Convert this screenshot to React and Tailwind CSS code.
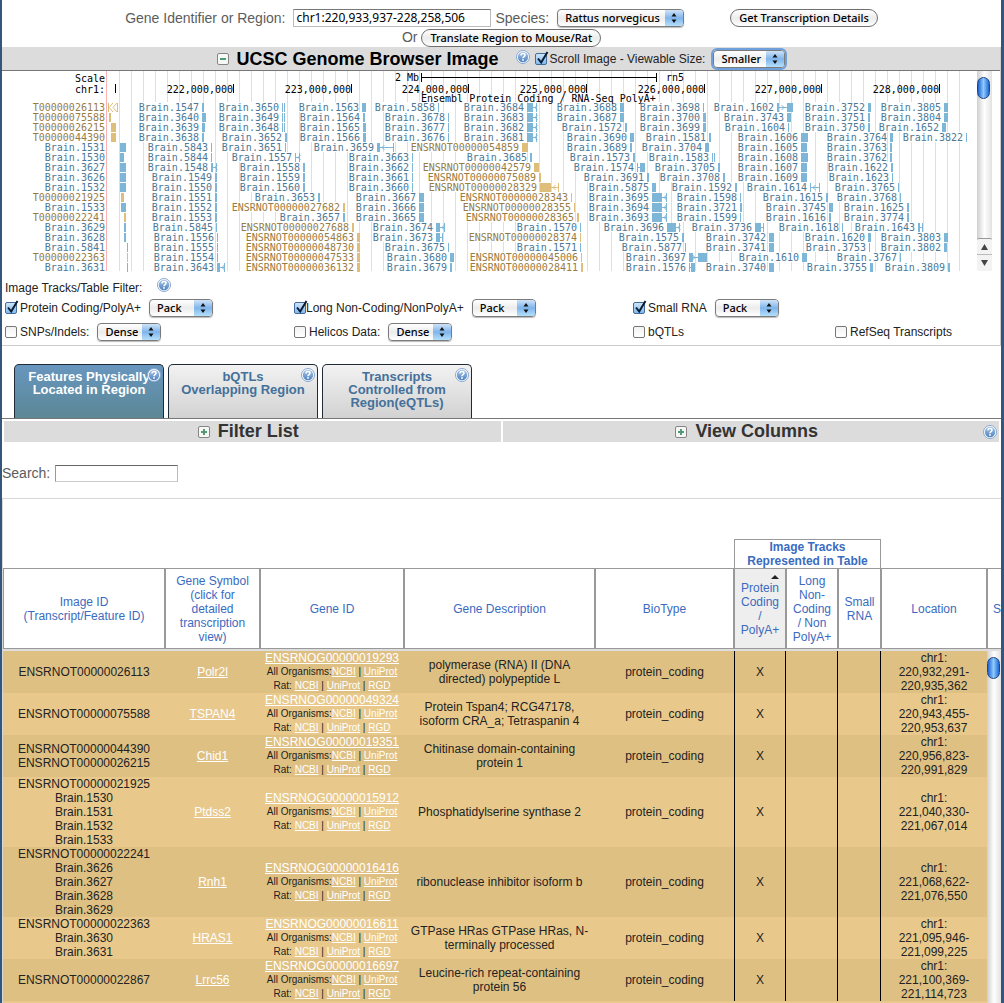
import React from "react";

const BLUE_BAR = "#7db6d6";
const GOLD_BAR = "#dfbd7b";

/* Each item: [label, start, width, tail end (optional), kind (optional)] */
const TRACK_ROWS = [
  [["T00000026113", 108, 10, 0, "chevrons"], ["Brain.1547", 202, 2], ["Brain.3650", 282, 3, 0, "pair"], ["Brain.1563", 362, 4], ["Brain.5858", 438, 1], ["Brain.3684", 527, 6, 537], ["Brain.3688", 620, 4], ["Brain.3698", 703, 1], ["Brain.1602", 777, 2, 0, "arrowBlock", 787, 6], ["Brain.3752", 868, 3], ["Brain.3805", 944, 4]],
  [["T00000075588", 109, 2], ["Brain.3640", 202, 4], ["Brain.3649", 282, 3, 0, "pair"], ["Brain.1564", 363, 2], ["Brain.3678", 448, 1], ["Brain.3683", 527, 6, 537], ["Brain.3687", 620, 4], ["Brain.3700", 703, 3], ["Brain.3743", 787, 4], ["Brain.3751", 868, 2], ["Brain.3804", 944, 4]],
  [["T00000026215", 111, 5], ["Brain.3639", 202, 3], ["Brain.3648", 282, 3, 0, "pair"], ["Brain.1565", 363, 3], ["Brain.3677", 448, 1], ["Brain.3682", 527, 6, 537], ["Brain.1572", 625, 2], ["Brain.3699", 703, 3], ["Brain.1604", 788, 1], ["Brain.3750", 868, 2], ["Brain.1652", 942, 4]],
  [["T00000044390", 111, 5], ["Brain.3638", 202, 2], ["Brain.3652", 285, 2], ["Brain.1566", 363, 3], ["Brain.3676", 448, 1], ["Brain.3681", 527, 6, 537], ["Brain.3690", 630, 4], ["Brain.1581", 709, 2], ["Brain.1606", 801, 7], ["Brain.3764", 890, 3], ["Brain.3822", 966, 1]],
  [["Brain.1531", 120, 6], ["Brain.5843", 211, 1], ["Brain.3651", 285, 1], ["Brain.3659", 377, 3, 394], ["ENSRNOT00000054859", 522, 6], ["Brain.3689", 630, 2], ["Brain.3704", 705, 4], ["Brain.1605", 801, 6], ["Brain.3763", 890, 2]],
  [["Brain.1530", 120, 4], ["Brain.5844", 211, 1], ["Brain.1557", 295, 1, 300], ["Brain.3663", 412, 1], ["Brain.3685", 530, 2], ["Brain.1573", 633, 2], ["Brain.1583", 712, 3, 0, "pair"], ["Brain.1608", 801, 7], ["Brain.3762", 890, 2]],
  [["Brain.3627", 120, 6], ["Brain.1548", 211, 2, 217], ["Brain.1558", 303, 2], ["Brain.3662", 412, 1], ["ENSRNOT00000042579", 534, 5], ["Brain.1574", 637, 1, 0, "arrowBlock", 640, 5], ["Brain.3705", 718, 2], ["Brain.1607", 801, 6], ["Brain.1622", 891, 2]],
  [["Brain.3626", 120, 6], ["Brain.1549", 215, 2], ["Brain.1559", 303, 2], ["Brain.3661", 412, 1], ["ENSRNOT00000075089", 539, 2], ["Brain.3691", 647, 2], ["Brain.3708", 723, 2], ["Brain.1609", 801, 6], ["Brain.1623", 892, 1]],
  [["Brain.1532", 120, 6], ["Brain.1550", 215, 2], ["Brain.1560", 303, 2], ["Brain.3660", 412, 1], ["ENSRNOT00000028329", 540, 11, 559], ["Brain.5875", 652, 4], ["Brain.1592", 735, 2], ["Brain.1614", 810, 1, 820], ["Brain.3765", 898, 1]],
  [["T00000021925", 121, 3], ["Brain.1551", 215, 2], ["Brain.3653", 318, 2], ["Brain.3667", 419, 5], ["ENSRNOT00000028343", 571, 1], ["Brain.3695", 652, 10, 667], ["Brain.1598", 740, 1], ["Brain.1615", 826, 2], ["Brain.3768", 900, 1]],
  [["Brain.1533", 121, 5], ["Brain.1552", 215, 2], ["ENSRNOT00000027682", 343, 2], ["Brain.3666", 419, 5], ["ENSRNOT00000028355", 574, 1], ["Brain.3694", 652, 10, 667], ["Brain.3721", 740, 2], ["Brain.3745", 829, 4], ["Brain.1625", 907, 2]],
  [["T00000022241", 124, 2], ["Brain.1553", 215, 2], ["Brain.3657", 343, 2], ["Brain.3665", 419, 5], ["ENSRNOT00000028365", 577, 2], ["Brain.3693", 652, 10, 667], ["Brain.1599", 740, 1], ["Brain.1616", 829, 2], ["Brain.3774", 907, 2]],
  [["Brain.3629", 124, 2], ["Brain.5845", 216, 1], ["ENSRNOT00000027688", 352, 2], ["Brain.3674", 436, 4, 445], ["Brain.1570", 580, 1], ["Brain.3696", 667, 9, 680], ["Brain.3736", 755, 6, 764], ["Brain.1618", 842, 1], ["Brain.1643", 918, 2, 923]],
  [["Brain.3628", 124, 2], ["Brain.1556", 217, 1], ["ENSRNOT00000054863", 357, 3], ["Brain.3673", 436, 4, 443], ["ENSRNOT00000028374", 580, 1], ["Brain.1575", 682, 2], ["Brain.3742", 769, 5], ["Brain.1620", 868, 3], ["Brain.3803", 944, 4]],
  [["Brain.5841", 127, 1], ["Brain.1555", 217, 1], ["ENSRNOT00000048730", 357, 3], ["Brain.3675", 448, 1], ["Brain.1571", 580, 1], ["Brain.5877", 685, 1], ["Brain.3741", 769, 5], ["Brain.3753", 869, 1], ["Brain.3802", 944, 3]],
  [["T00000022363", 127, 1], ["Brain.1554", 217, 1], ["ENSRNOT00000047533", 357, 3], ["Brain.3680", 450, 4], ["ENSRNOT00000045006", 581, 1], ["Brain.3697", 689, 4, 0, "arrowBlock", 698, 9], ["Brain.1610", 802, 5], ["Brain.3767", 900, 1]],
  [["Brain.3631", 127, 1], ["Brain.3643", 217, 3, 225], ["ENSRNOT00000036132", 357, 3], ["Brain.3679", 450, 2], ["ENSRNOT00000028411", 581, 2], ["Brain.1576", 689, 1, 0, "arrowBlock", 691, 4], ["Brain.3740", 769, 5], ["Brain.3755", 870, 3], ["Brain.3809", 948, 2]],
];

const AXIS = [
  ["222,000,000", 233],
  ["223,000,000", 351],
  ["224,000,000", 468],
  ["225,000,000", 586],
  ["226,000,000", 704],
  ["227,000,000", 821],
  ["228,000,000", 939],
];

function Feature({ item, first, row }) {
  const [label, x, w, tail, kind, bx, bw] = item;
  const blue = label.startsWith("Brain");
  const color = blue ? BLUE_BAR : GOLD_BAR;
  const top = 103 + row * 10;
  const mid = top + 4;
  const end = first ? 105 : x - 3;
  return (
    <g fill={color} stroke="none">
      <rect x={end - label.length * 6} y={top - 1} width={label.length * 6} height={10} fill="#fff" />
      <text x={end} y={top + 8} textAnchor="end" fill={blue ? "#4d7896" : "#977c45"}>
        {label}
      </text>
      {kind === "chevrons" ? (
        <path d={`M${x + 0.5} ${top}v9M${x + 5} ${top}l-4 4.500l4 4.500M${x + 9} ${top}l-4 4.500l4 4.500M${x + 9.5} ${top}v9`} fill="none" stroke={color} />
      ) : kind === "pair" ? (
        <path d={`M${x} ${top}h1v9h-1zM${x + 2} ${top}h1v9h-1z`} />
      ) : (
        <rect x={x} y={top} width={w} height={9} />
      )}
      {tail ? <path d={`M${x + w} ${mid}h${tail - x - w}v1h${x + w - tail}zM${tail - 1} ${top}h1v9h-1z`} /> : null}
      {tail && tail - x - w > 3 ? (
        <path d={`M${x + w + 4.5} ${top + 2}l-2.500 2.500l2.500 2.500`} fill="none" stroke={color} />
      ) : null}
      {kind === "arrowBlock" ? (
        <>
          <path d={`M${x + w} ${mid}h${bx - x - w}v1h${x + w - bx}zM${bx} ${top}h${bw}v9h${-bw}z`} />
          {bx - x > 6 ? <path d={`M${bx - 5.5} ${top + 2}l2.500 2.500l-2.500 2.500`} fill="none" stroke={color} /> : null}
        </>
      ) : null}
    </g>
  );
}

function GenomeImage() {
  return (
    <svg
      width="974"
      height="203"
      viewBox="3 71 974 203"
      role="img"
      aria-label="Genome region chr1:220,933,937-228,258,506"
      className="block shrink-0"
      fontFamily='"DejaVu Sans Mono", monospace'
      fontSize="10"
    >
      <g fill="#dcdcf8">
        {Array.from({ length: 71 }, (_, i) => (
          <rect key={i} x={119 + i * 12} y="71" width="1" height="200" />
        ))}
      </g>
      <rect x="106" y="71" width="1" height="200" fill="#ffb0b0" />
      <g fill="#000">
        <text x="105" y="82" textAnchor="end">Scale</text>
        <text x="105" y="93" textAnchor="end">chr1:</text>
        <rect x="115" y="84" width="1" height="9" />
        {AXIS.map(([label, x]) => (
          <g key={label}>
            <text x={x} y="93" textAnchor="end">{label}</text>
            <rect x={x} y="84" width="1" height="9" />
          </g>
        ))}
        <text x="419" y="81" textAnchor="end">2 Mb</text>
        <path d="M421 73h1v9h-1zM422 77h234v1H422zM656 73h1v9h-1z" />
        <text x="666" y="81">rn5</text>
      </g>
      {TRACK_ROWS.map((items, row) =>
        items.map((item, i) => <Feature key={item[0]} item={item} first={i === 0} row={row} />)
      )}
      <text x="421" y="102" fill="#000">Ensembl Protein Coding / RNA-Seq PolyA+</text>
    </svg>
  );
}

function HelpButton({ className = "" }) {
  return (
    <button type="button" aria-label="Help" className={`block shrink-0 ${className}`}>
      <svg width="14" height="14" viewBox="0 0 14 14" className="block">
        <defs>
          <linearGradient id="help-fill" x1="0" y1="0" x2="0" y2="1">
            <stop offset="0" stopColor="#a9c6e8" />
            <stop offset="1" stopColor="#4f82bf" />
          </linearGradient>
        </defs>
        <circle cx="7" cy="7" r="6.5" fill="#fff" stroke="#86a8d0" />
        <circle cx="7" cy="7" r="5.2" fill="url(#help-fill)" />
        <path d="M5 5.600C5 4.200 5.900 3.600 7 3.600s2 .7 2 1.700c0 1.400-2 1.400-2 2.900" fill="none" stroke="#fff" strokeWidth="1.500" />
        <circle cx="7" cy="10" r=".9" fill="#fff" />
      </svg>
    </button>
  );
}

function ToggleButton({ open, label }) {
  return (
    <button type="button" aria-label={label} className="block shrink-0">
      <svg width="12" height="12" viewBox="0 0 12 12" className="block">
        <rect x=".5" y=".5" width="11" height="11" rx="1.500" fill="#f7f7f7" stroke="#858585" />
        <path d={open ? "M3 6h6" : "M3 6h6M6 3v6"} stroke="#4f9b78" strokeWidth="2" />
      </svg>
    </button>
  );
}

function Check({ id, checked = false, label, gap = "gap-[3px]" }) {
  return (
    <label htmlFor={id} className={`flex items-center ${gap}`}>
      <span className="relative block size-3">
        <input
          id={id}
          type="checkbox"
          defaultChecked={checked}
          className="peer block size-3 appearance-none rounded-[2px] border border-[#777] bg-linear-to-b from-[#f2f2f2] to-white checked:border-[#456a9c] checked:from-[#cfe4f8] checked:to-[#7fbaf0]"
        />
        <svg viewBox="0 0 14 14" width="14" height="14" className="pointer-events-none absolute bottom-0 left-0 hidden peer-checked:block">
          <path d="M3 7.500l3.200 4L12.500 1" fill="none" stroke="#0b1d33" strokeWidth="2" />
        </svg>
      </span>
      {label}
    </label>
  );
}

function Picker({ id, label, value, width, glow = false }) {
  return (
    <span
      className={`relative block h-[18px] shrink-0 overflow-hidden rounded-[4px] border border-[#7b7b7b] bg-linear-to-b from-white via-[#ececec] to-white text-black shadow-[0_1px_1px_#bbb] ${width} ${glow ? "outline-2 outline-[#6fa0dc]" : ""}`}
    >
      <select
        id={id}
        aria-label={label}
        defaultValue={value}
        className="block h-4 w-full appearance-none bg-transparent pl-[7px] font-['Noto_Sans','Open_Sans',sans-serif] text-[11px] leading-4 font-medium outline-none"
      >
        <option>{value}</option>
      </select>
      <svg viewBox="0 0 18 16" width="18" height="16" className="pointer-events-none absolute top-0 right-0">
        <defs>
          <linearGradient id="aqua-step" x1="0" y1="0" x2="0" y2="1">
            <stop offset="0" stopColor="#cfe3f7" />
            <stop offset=".5" stopColor="#7fb5ec" />
            <stop offset="1" stopColor="#b5e0fb" />
          </linearGradient>
        </defs>
        <rect width="18" height="16" fill="url(#aqua-step)" />
        <path d="M9 3l2.500 3.500h-5zM9 13l2.500-3.500h-5z" fill="#111" />
      </svg>
    </span>
  );
}

function AquaButton({ children }) {
  return (
    <button
      type="button"
      className="h-[18px] shrink-0 rounded-full border border-[#6f6f6f] bg-linear-to-b from-white via-[#ececec] to-white px-2 font-['Noto_Sans','Open_Sans',sans-serif] text-[11px] leading-4 font-medium text-black"
    >
      {children}
    </button>
  );
}

function ScrollTrack({ arrows = false }) {
  return (
    <div className="flex w-full flex-1 flex-col bg-linear-to-r from-[#cfcfcf] via-white to-[#e2e2e2]">
      <div className="h-1.5" />
      <div className="h-[22px] w-[13px] rounded-full border border-[#24477f] bg-linear-to-r from-[#1e5fd0] via-[#8fcbfb] to-[#1c66d6]" />
      <div className="flex-1" />
      {arrows && (
        <div className="rounded-t-[2px] border-t border-[#999] bg-[#f3f3f3]">
          <button type="button" aria-label="Scroll up" className="flex h-4 w-full items-center justify-center border-b border-[#bbb]">
            <svg width="7" height="6" viewBox="0 0 7 6"><path d="M3.500 0L7 6H0z" fill="#444" /></svg>
          </button>
          <button type="button" aria-label="Scroll down" className="flex h-4 w-full items-center justify-center">
            <svg width="7" height="6" viewBox="0 0 7 6"><path d="M3.500 6L7 0H0z" fill="#444" /></svg>
          </button>
        </div>
      )}
    </div>
  );
}

const TABS = [
  { text: "Features Physically\nLocated in Region", active: true },
  { text: "bQTLs\nOverlapping Region" },
  { text: "Transcripts\nControlled from\nRegion(eQTLs)" },
];

const GENES = [
  { ids: ["ENSRNOT00000026113"], symbol: "Polr2l", gene: "ENSRNOG00000019293", desc: "polymerase (RNA) II (DNA\ndirected) polypeptide L", loc: "chr1:\n220,932,291-\n220,935,362" },
  { ids: ["ENSRNOT00000075588"], symbol: "TSPAN4", gene: "ENSRNOG00000049324", desc: "Protein Tspan4; RCG47178,\nisoform CRA_a; Tetraspanin 4", loc: "chr1:\n220,943,455-\n220,953,637" },
  { ids: ["ENSRNOT00000044390", "ENSRNOT00000026215"], symbol: "Chid1", gene: "ENSRNOG00000019351", desc: "Chitinase domain-containing\nprotein 1", loc: "chr1:\n220,956,823-\n220,991,829" },
  { ids: ["ENSRNOT00000021925", "Brain.1530", "Brain.1531", "Brain.1532", "Brain.1533"], symbol: "Ptdss2", gene: "ENSRNOG00000015912", desc: "Phosphatidylserine synthase 2", loc: "chr1:\n221,040,330-\n221,067,014" },
  { ids: ["ENSRNOT00000022241", "Brain.3626", "Brain.3627", "Brain.3628", "Brain.3629"], symbol: "Rnh1", gene: "ENSRNOG00000016416", desc: "ribonuclease inhibitor isoform b", loc: "chr1:\n221,068,622-\n221,076,550" },
  { ids: ["ENSRNOT00000022363", "Brain.3630", "Brain.3631"], symbol: "HRAS1", gene: "ENSRNOG00000016611", desc: "GTPase HRas GTPase HRas, N-\nterminally processed", loc: "chr1:\n221,095,946-\n221,099,225" },
  { ids: ["ENSRNOT00000022867"], symbol: "Lrrc56", gene: "ENSRNOG00000016697", desc: "Leucine-rich repeat-containing\nprotein 56", loc: "chr1:\n221,100,369-\n221,114,723" },
];

const HEADERS = [
  "Image ID\n(Transcript/Feature ID)",
  "Gene Symbol\n(click for\ndetailed\ntranscription\nview)",
  "Gene ID",
  "Gene Description",
  "BioType",
  "Protein\nCoding\n/\nPolyA+",
  "Long\nNon-\nCoding\n/ Non\nPolyA+",
  "Small\nRNA",
  "Location",
];

function WhiteLink({ children }) {
  return <a href="#" className="text-white underline">{children}</a>;
}

function GeneTable() {
  return (
    <table className="w-full table-fixed border-separate border-spacing-0 text-center text-[12px] leading-[14px] text-[#222]">
      <colgroup>
        <col className="w-[162px]" />
        <col className="w-[95px]" />
        <col className="w-[144px]" />
        <col />
        <col className="w-[139px]" />
        <col className="w-[52px]" />
        <col className="w-[52px]" />
        <col className="w-[43px]" />
        <col className="w-[106px]" />
      </colgroup>
      <thead className="text-[#3a6bbf]">
        <tr className="h-[29px]">
          <td colSpan={5} />
          <th colSpan={3} className="border border-b-0 border-[#999] p-0 font-bold">
            Image Tracks<br />Represented in Table
          </th>
          <td />
        </tr>
        <tr className="h-[81px]">
          {HEADERS.map((h, i) => (
            <th key={h} scope="col" className={`relative border border-[#999] p-0 font-normal whitespace-pre-line ${i === 5 ? "bg-[#eee]" : ""}`}>
              {h}
              {i === 5 && (
                <svg width="8" height="4" viewBox="0 0 8 4" className="absolute top-1.5 right-1.5">
                  <path d="M4 0l4 4H0z" fill="#222" />
                </svg>
              )}
            </th>
          ))}
        </tr>
        <tr className="h-[2px]">
          <td colSpan={9} className="bg-[#dedede] p-0 leading-none" />
        </tr>
      </thead>
      <tbody>
        {GENES.map((g) => (
          <tr key={g.gene} className="h-[42px] odd:bg-[#dfc083] even:bg-[#e8c98b]">
            <td className="p-0">{g.ids.map((id) => <div key={id}>{id}</div>)}</td>
            <td className="p-0"><WhiteLink>{g.symbol}</WhiteLink></td>
            <td className="p-0">
              <div><WhiteLink>{g.gene}</WhiteLink></div>
              <div className="text-[10px]">All Organisms:<WhiteLink>NCBI</WhiteLink> | <WhiteLink>UniProt</WhiteLink></div>
              <div className="text-[10px]">Rat: <WhiteLink>NCBI</WhiteLink> | <WhiteLink>UniProt</WhiteLink> | <WhiteLink>RGD</WhiteLink></div>
            </td>
            <td className="p-0 whitespace-pre-line">{g.desc}</td>
            <td className="p-0">protein_coding</td>
            <td className="border-x border-black p-0">X</td>
            <td className="border-r border-black p-0" />
            <td className="border-r border-black p-0" />
            <td className="p-0 whitespace-pre-line">{g.loc}</td>
          </tr>
        ))}
      </tbody>
    </table>
  );
}

export default function App() {
  return (
    <div className="flex h-screen flex-col overflow-hidden border-r-[3px] border-l-2 border-[#34567c] bg-white font-['Liberation_Sans',Arial,sans-serif]">
      <header className="pt-2 text-[14px] text-[#5c5c5c]">
        <div className="flex h-5 items-center justify-center">
          <label htmlFor="region">Gene Identifier or Region:</label>
          <input
            id="region"
            defaultValue="chr1:220,933,937-228,258,506"
            className="mr-1 ml-2 h-[18px] w-[198px] border border-t-[#777] border-r-[#bbb] border-b-[#bbb] border-l-[#bbb] px-0.5 font-['Noto_Sans','Open_Sans',sans-serif] text-[12px] text-black"
          />
          <label htmlFor="species" className="mr-2">Species:</label>
          <Picker id="species" value="Rattus norvegicus" width="w-[127px]" />
          <div className="w-[46px]" />
          <AquaButton>Get Transcription Details</AquaButton>
        </div>
        <div className="flex h-[19px] items-center justify-center gap-1">
          Or
          <AquaButton>Translate Region to Mouse/Rat</AquaButton>
        </div>
      </header>

      <section className="border-r border-b border-[#ccc] text-[12px] text-[#222]">
        <div className="flex h-6 items-center justify-center border-b border-[#777] bg-[#dcdcdc]">
          <ToggleButton open label="Collapse genome image" />
          <h2 className="ml-2 text-[18px] leading-5 font-bold text-black">UCSC Genome Browser Image</h2>
          <HelpButton className="mr-[5px] mb-1 ml-[17px]" />
          <Check id="scroll" checked label="Scroll Image - Viewable Size:" />
          <div className="w-2" />
          <Picker id="size" label="Viewable size" value="Smaller" width="w-[72px]" glow />
        </div>
        <div className="flex overflow-hidden pl-px">
          <GenomeImage />
          <div className="flex h-[200px] w-[15px]"><ScrollTrack arrows /></div>
        </div>
        <div className="px-[3px] pb-px">
          <div className="flex h-[22px] items-center gap-[15px] pt-1.5">
            Image Tracks/Table Filter:
            <HelpButton className="mb-1.5" />
          </div>
          <div className="grid grid-cols-[289px_339px_202px_1fr]">
            <div className="flex h-6 items-center gap-2">
              <Check id="pc" checked label="Protein Coding/PolyA+" />
              <Picker label="Protein Coding display" value="Pack" width="w-[64px]" />
            </div>
            <div className="flex h-6 items-center gap-2">
              <Check id="lnc" checked label="Long Non-Coding/NonPolyA+" gap="gap-0" />
              <Picker label="Long Non-Coding display" value="Pack" width="w-[64px]" />
            </div>
            <div className="flex h-6 items-center gap-2">
              <Check id="srna" checked label="Small RNA" />
              <Picker label="Small RNA display" value="Pack" width="w-[64px]" />
            </div>
            <div />
            <div className="flex h-6 items-center gap-2">
              <Check id="snp" label="SNPs/Indels:" />
              <Picker label="SNPs display" value="Dense" width="w-[64px]" />
            </div>
            <div className="flex h-6 items-center gap-2">
              <Check id="helicos" label="Helicos Data:" />
              <Picker label="Helicos display" value="Dense" width="w-[64px]" />
            </div>
            <div className="flex h-6 items-center"><Check id="bqtl" label="bQTLs" /></div>
            <div className="flex h-6 items-center"><Check id="refseq" label="RefSeq Transcripts" /></div>
          </div>
        </div>
      </section>

      <nav className="mt-[18px] flex gap-1 border-b border-[#777] pl-3">
        {TABS.map((tab) => (
          <div
            key={tab.text}
            className={`relative h-[54px] w-[150px] rounded-t-[5px] border border-b-0 border-[#1f2c38] bg-linear-to-b ${tab.active ? "from-[#6896be] to-[#5b8796] text-white" : "from-[#f2f2f2] to-[#d2d2d2] text-[#44709a]"}`}
          >
            <button type="button" className="flex size-full justify-center pt-[5px] text-[13px] leading-[13px] font-bold whitespace-pre-line">
              {tab.text}
            </button>
            <HelpButton className="absolute top-[3px] right-[2px]" />
          </div>
        ))}
      </nav>

      <div className="flex gap-0.5 px-0.5 pt-0.5 text-[18px] leading-[21px] font-bold text-[#333]">
        <div className="flex h-[21px] flex-1 items-center justify-center gap-2 bg-[#dcdcdc] pr-2">
          <ToggleButton label="Expand filter list" />
          <h3>Filter List</h3>
        </div>
        <div className="relative flex h-[21px] flex-1 items-center justify-center gap-2 bg-[#dcdcdc] pr-2">
          <ToggleButton label="Expand view columns" />
          <h3>View Columns</h3>
          <HelpButton className="absolute top-1 right-[2px]" />
        </div>
      </div>

      <div className="flex items-center gap-[5px] pt-[23px] pb-4 text-[14px] leading-[17px] text-[#5c5c5c]">
        <label htmlFor="search">Search:</label>
        <input id="search" className="h-[17px] w-[123px] border border-t-[#666] border-r-[#bbb] border-b-[#ccc] border-l-[#999] px-0.5 text-[12px] text-black" />
      </div>

      <div className="flex min-h-0 flex-1 overflow-hidden border-t border-l border-[#d8d8d8] pt-10">
        <div className="flex min-w-0 flex-1 flex-col">
          <GeneTable />
          <div className="flex-1 bg-[#e8c98b]" />
        </div>
        <div className="flex w-3.5 shrink-0 flex-col pt-[29px]">
          <div className="flex h-[81px] items-center overflow-hidden border border-r-0 border-[#999] pl-[5px] text-[12px] text-[#3a6bbf]">St</div>
          <div className="h-[2px] bg-[#dedede]" />
          <ScrollTrack />
        </div>
      </div>
    </div>
  );
}
